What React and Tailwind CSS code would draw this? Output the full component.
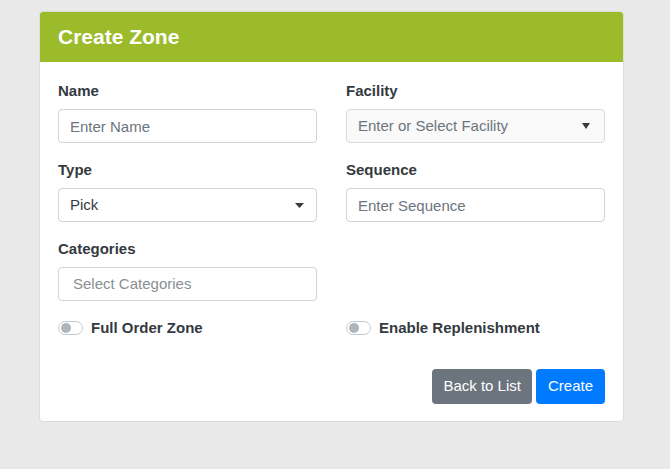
import React from 'react'

function Field({ label, children }) {
  return (
    <div className="flex flex-col">
      <label className="mb-[7px] text-[15px] leading-[22px] font-bold text-[#343a40]">{label}</label>
      {children}
    </div>
  )
}

function TextInput({ placeholder }) {
  return (
    <input
      placeholder={placeholder}
      className="h-[34px] w-full rounded-[4px] border border-[#ced4da] bg-white px-[11px] text-[15px] text-[#495057] placeholder:text-[#6c757d] outline-none"
    />
  )
}

export default function App() {
  return (
    <div className="min-h-[469px] bg-[#e9e9e9] pt-[11px] pl-[39px] pr-[46px] font-['Liberation_Sans',Arial,sans-serif]">
      <div className="overflow-hidden rounded-[4px] border border-[#dcdcdc] bg-white">
        <div className="-mt-px flex h-[51px] items-center bg-[#9bbb2a] px-[18px]">
          <h1 className="text-[21px] font-bold text-white">Create Zone</h1>
        </div>
        <div className="px-[18px] pt-[18px] pb-[17px]">
          <div className="grid grid-cols-2 gap-x-[29px] gap-y-[16px]">
            <Field label="Name">
              <TextInput placeholder="Enter Name" />
            </Field>
            <Field label="Facility">
              {/* searchable combo, rendered with a lighter fill */}
              <div className="flex h-[34px] items-center justify-between rounded-[4px] border border-[#dadada] bg-[#f9f9f9] pl-[11px] pr-[14px] text-[15px]">
                <span className="text-[#6c757d]">Enter or Select Facility</span>
                <svg width="8" height="6" viewBox="0 0 8 6">
                  <path d="M0 0h8L4 6z" fill="#343a40" />
                </svg>
              </div>
            </Field>
            <Field label="Type">
              <div className="flex h-[34px] items-center justify-between rounded-[4px] border border-[#ced4da] bg-white pl-[11px] pr-[12px] text-[15px]">
                <span className="text-[#343a40]">Pick</span>
                <svg width="9" height="5" viewBox="0 0 9 5">
                  <path d="M0 0h9L4.5 5z" fill="#343a40" />
                </svg>
              </div>
            </Field>
            <Field label="Sequence">
              <TextInput placeholder="Enter Sequence" />
            </Field>
            <Field label="Categories">
              <div className="flex h-[34px] items-center rounded-[4px] border border-[#ced4da] bg-white px-[14px] text-[15px] text-[#8a8f94]">
                Select Categories
              </div>
            </Field>
            <div />
            {['Full Order Zone', 'Enable Replenishment'].map((label) => (
              <div key={label} className="flex items-center gap-[8px]">
                <span className="relative inline-block h-[14px] w-[25px] rounded-full border border-[#c4c9ce] bg-white">
                  <span className="absolute left-[2px] top-[1px] h-[10px] w-[10px] rounded-full bg-[#adb5bd]" />
                </span>
                <span className="text-[15px] font-bold text-[#343a40]">{label}</span>
              </div>
            ))}
          </div>
          <div className="mt-[29px] flex justify-end gap-[4px]">
            <button className="h-[35px] rounded-[4px] bg-[#6c757d] px-[11px] text-[15px] text-white">Back to List</button>
            <button className="h-[35px] rounded-[4px] bg-[#007bff] px-[12px] text-[15px] text-white">Create</button>
          </div>
        </div>
      </div>
    </div>
  )
}
